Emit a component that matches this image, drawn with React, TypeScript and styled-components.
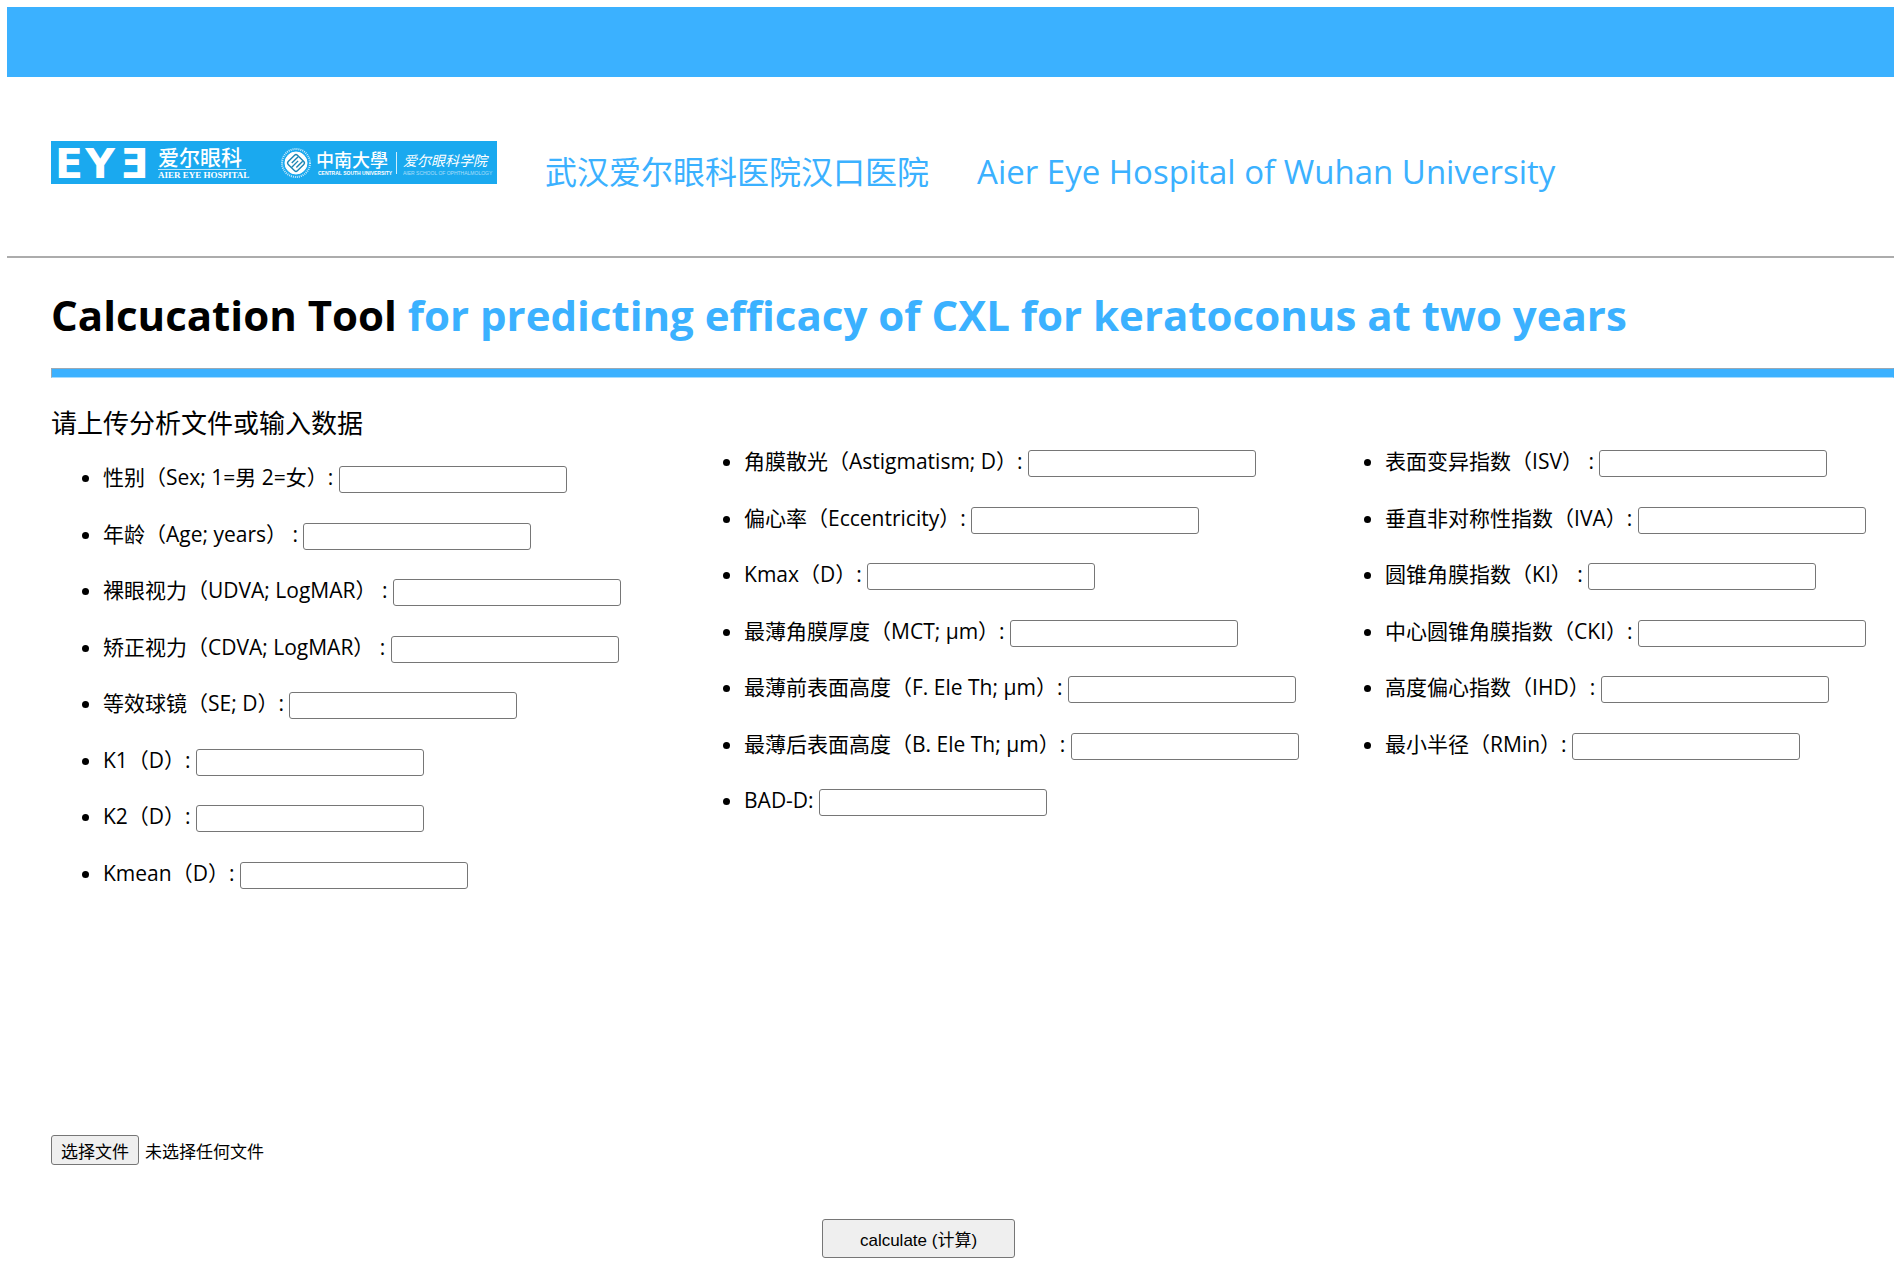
import React, { useRef, useState } from 'react';
import styled, { createGlobalStyle } from 'styled-components';

const BRAND = '#3bb1ff';
const SANS = '"Open Sans", "Noto Sans CJK SC", sans-serif';

const GlobalStyle = createGlobalStyle`
  body {
    margin: 7px;
    background: #fff;
    color: #000;
    font-family: ${SANS};
  }
`;

const TopBand = styled.div`
  height: 70px;
  background: ${BRAND};
`;

const Header = styled.header`
  display: flex;
  align-items: baseline;
  gap: 48px;
  padding: 64px 44px 62px;
  border-bottom: 2px solid #acacac;
  color: ${BRAND};
  line-height: 44px;
`;

const HospitalName = styled.span`
  font-size: 32px;

  &:lang(en) {
    font-size: 33px;
  }
`;

const Logo = styled.svg`
  flex: none;
  width: 446px;
  height: 43px;
  overflow: visible;
`;

const Main = styled.main`
  padding-left: 44px;
`;

const Title = styled.h1`
  margin: 0;
  padding: 27px 0 23px;
  font-size: 42px;
  line-height: 60px;
  font-weight: 700;
`;

const Accent = styled.span`
  color: ${BRAND};
`;

const Bar = styled.hr`
  box-sizing: border-box;
  height: 10px;
  margin: 0;
  border: 1px solid;
  border-color: #9aa9b5 ${BRAND} #a5dbff #9aa9b5;
  background: ${BRAND};
`;

const Columns = styled.div`
  display: grid;
  grid-template-columns: 8fr 8fr 7fr;
  padding-top: 27px;
`;

const Column = styled.section<{ $raised?: boolean }>`
  padding-top: ${(p) => (p.$raised ? 28 : 0)}px;
`;

const Prompt = styled.h2`
  margin: 0 0 8px;
  font-size: 26px;
  line-height: 36px;
  font-weight: 400;
`;

const FieldList = styled.ul`
  margin: 0;
  padding: 0 0 0 52px;
`;

const FieldItem = styled.li`
  height: 57px;
  font-size: 21px;
  line-height: 57px;
  white-space: nowrap;

  &:nth-child(even) {
    height: 56px;
  }
`;

const TextBox = styled.input`
  box-sizing: border-box;
  width: 228px;
  height: 27px;
  margin: 0;
  padding: 1px 3px;
  border: 1px solid #767676;
  border-radius: 3px;
  background: #fff;
  font: 17px "Liberation Sans", sans-serif;
  vertical-align: middle;
`;

const FileRow = styled.div`
  display: flex;
  align-items: center;
  gap: 6px;
  margin-top: 234px;
  font: 17px "Liberation Sans", "Noto Sans CJK SC", sans-serif;
`;

const Button = styled.button<{ $large?: boolean }>`
  box-sizing: border-box;
  width: ${(p) => (p.$large ? '193px' : 'auto')};
  height: ${(p) => (p.$large ? 39 : 30)}px;
  padding: 0 9px;
  border: 1px solid #767676;
  border-radius: 3px;
  background: #efefef;
  color: #000;
  font: 17px "Liberation Sans", "Noto Sans CJK SC", sans-serif;
`;

const HiddenFile = styled.input`
  display: none;
`;

const Actions = styled.div`
  display: flex;
  justify-content: center;
  margin-top: 54px;
  padding-right: 108px;
`;

type Field = { id: string; label: string };

const general: Field[] = [
  { id: 'sex', label: '性别（Sex; 1=男 2=女）:' },
  { id: 'age', label: '年龄（Age; years） :' },
  { id: 'udva', label: '裸眼视力（UDVA; LogMAR） :' },
  { id: 'cdva', label: '矫正视力（CDVA; LogMAR） :' },
  { id: 'se', label: '等效球镜（SE; D）:' },
  { id: 'k1', label: 'K1（D）:' },
  { id: 'k2', label: 'K2（D）:' },
  { id: 'kmean', label: 'Kmean（D）:' },
];

const cornea: Field[] = [
  { id: 'astigmatism', label: '角膜散光（Astigmatism; D）:' },
  { id: 'eccentricity', label: '偏心率（Eccentricity）:' },
  { id: 'kmax', label: 'Kmax（D）:' },
  { id: 'mct', label: '最薄角膜厚度（MCT; μm）:' },
  { id: 'fele', label: '最薄前表面高度（F. Ele Th; μm）:' },
  { id: 'bele', label: '最薄后表面高度（B. Ele Th; μm）:' },
  { id: 'badd', label: 'BAD-D:' },
];

const indices: Field[] = [
  { id: 'isv', label: '表面变异指数（ISV） :' },
  { id: 'iva', label: '垂直非对称性指数（IVA）:' },
  { id: 'ki', label: '圆锥角膜指数（KI） :' },
  { id: 'cki', label: '中心圆锥角膜指数（CKI）:' },
  { id: 'ihd', label: '高度偏心指数（IHD）:' },
  { id: 'rmin', label: '最小半径（RMin）:' },
];

function Fields({ items }: { items: Field[] }) {
  return (
    <FieldList>
      {items.map(({ id, label }) => (
        <FieldItem key={id}>
          <label htmlFor={id}>{label}</label> <TextBox id={id} name={id} type="text" />
        </FieldItem>
      ))}
    </FieldList>
  );
}

function HospitalLogo() {
  return (
    <Logo viewBox="0 0 446 43">
      <rect width="446" height="43" fill="#1aa9ef" />
      <g fill="#fff">
        <g fontFamily="DejaVu Sans" fontWeight="700" fontSize="41">
          <text x="4" y="37">E</text>
          <text x="49" y="37" textAnchor="middle">Y</text>
          <text x="97" y="37" textAnchor="end">Ǝ</text>
        </g>
        <text x="107" y="24" fontFamily="Noto Sans CJK SC" fontWeight="500" fontSize="21">爱尔眼科</text>
        <rect x="107" y="28" width="88" height="1" opacity="0.7" />
        <text x="107" y="37" fontFamily="Liberation Serif" fontWeight="700" fontSize="9">AIER EYE HOSPITAL</text>
        <text x="265" y="26" fontFamily="Noto Sans CJK TC" fontWeight="500" fontSize="18">中南大學</text>
        <text x="267" y="34" fontFamily="Liberation Sans" fontWeight="700" fontSize="5">CENTRAL SOUTH UNIVERSITY</text>
        <rect x="345" y="11" width="1" height="22" opacity="0.8" />
        <text x="352" y="25" fontFamily="Noto Sans CJK SC" fontStyle="italic" fontSize="14">爱尔眼科学院</text>
        <text x="352" y="34" fontFamily="Liberation Sans" fontSize="5" opacity="0.6">AIER SCHOOL OF OPHTHALMOLOGY</text>
      </g>
      <g fill="none" stroke="#fff">
        <circle cx="245" cy="22" r="14" strokeWidth="2" strokeDasharray="1 1" opacity="0.75" />
        <circle cx="245" cy="22" r="11" fill="#fff" />
        <g stroke="#1b86b4" strokeWidth="1.4" transform="rotate(45 245 22)">
          <rect x="238.5" y="15.5" width="13" height="13" rx="2" />
          <path d="M242 16v9M245 19v9M248.500 16v9" />
        </g>
      </g>
    </Logo>
  );
}

export default function App() {
  const fileInput = useRef<HTMLInputElement>(null);
  const [fileName, setFileName] = useState('未选择任何文件');

  return (
    <>
      <GlobalStyle />
      <TopBand />
      <Header>
        <HospitalLogo />
        <HospitalName lang="zh-CN">武汉爱尔眼科医院汉口医院</HospitalName>
        <HospitalName lang="en">Aier Eye Hospital of Wuhan University</HospitalName>
      </Header>
      <Main>
        <Title>
          Calcucation Tool <Accent>for predicting efficacy of CXL for keratoconus at two years</Accent>
        </Title>
        <Bar />
        <form onSubmit={(e) => e.preventDefault()}>
          <Columns>
            <Column>
              <Prompt>请上传分析文件或输入数据</Prompt>
              <Fields items={general} />
            </Column>
            <Column $raised>
              <Fields items={cornea} />
            </Column>
            <Column $raised>
              <Fields items={indices} />
            </Column>
          </Columns>
          <FileRow>
            <Button type="button" onClick={() => fileInput.current?.click()}>选择文件</Button>
            <label htmlFor="datafile">{fileName}</label>
            <HiddenFile
              id="datafile"
              ref={fileInput}
              type="file"
              onChange={(e) => setFileName(e.target.files?.[0]?.name ?? '未选择任何文件')}
            />
          </FileRow>
          <Actions>
            <Button $large type="submit">calculate (计算)</Button>
          </Actions>
        </form>
      </Main>
    </>
  );
}
